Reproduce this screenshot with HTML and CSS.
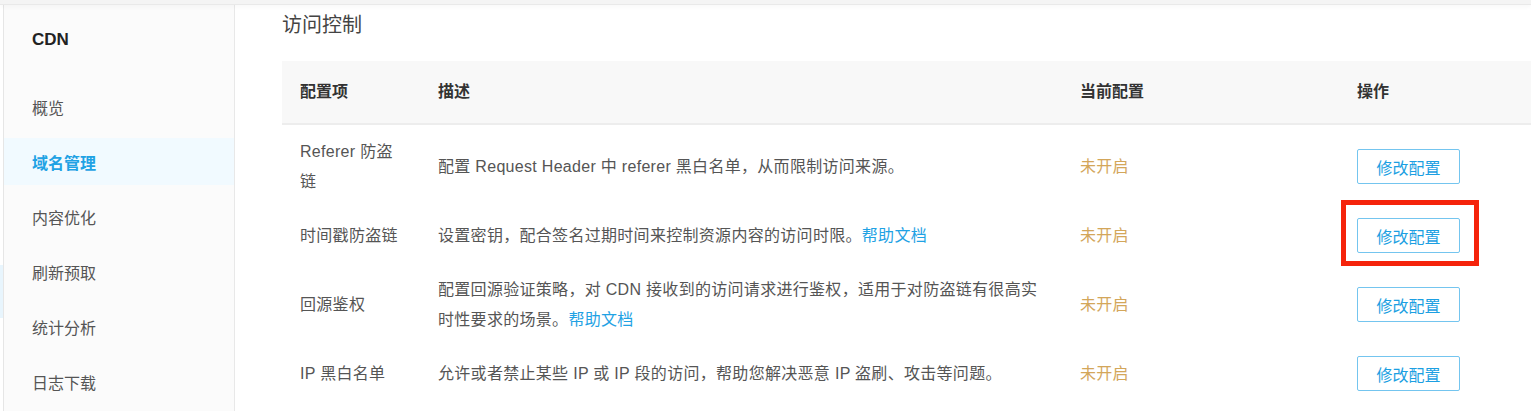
FILE: index.html
```html
<!DOCTYPE html>
<html lang="zh-CN">
<head>
<meta charset="utf-8">
<title>CDN 访问控制</title>
<link rel="stylesheet" href="styles.css">
</head>
<body>
<div class="page">
  <div class="topbar"></div>
  <div class="layout">
    <div class="edge"><div class="edge-mark"></div></div>
    <nav class="sidebar">
      <div class="side-title">CDN</div>
      <div class="side-item">概览</div>
      <div class="side-item active">域名管理</div>
      <div class="side-item">内容优化</div>
      <div class="side-item">刷新预取</div>
      <div class="side-item">统计分析</div>
      <div class="side-item">日志下载</div>
    </nav>
    <main class="main">
      <h2 class="section-title">访问控制</h2>
      <div class="table">
        <div class="row head">
          <div class="cell c1">配置项</div>
          <div class="cell c2">描述</div>
          <div class="cell c3">当前配置</div>
          <div class="cell c4">操作</div>
        </div>
        <div class="tbody">
          <div class="row">
            <div class="cell c1">Referer 防盗链</div>
            <div class="cell c2">配置 Request Header 中 referer 黑白名单，从而限制访问来源。</div>
            <div class="cell c3 off">未开启</div>
            <div class="cell c4"><button class="btn">修改配置</button></div>
          </div>
          <div class="row">
            <div class="cell c1">时间戳防盗链</div>
            <div class="cell c2">设置密钥，配合签名过期时间来控制资源内容的访问时限。<a class="link">帮助文档</a></div>
            <div class="cell c3 off">未开启</div>
            <div class="cell c4"><button class="btn">修改配置</button></div>
          </div>
          <div class="row">
            <div class="cell c1">回源鉴权</div>
            <div class="cell c2">配置回源验证策略，对 CDN 接收到的访问请求进行鉴权，适用于对防盗链有很高实时性要求的场景。<a class="link">帮助文档</a></div>
            <div class="cell c3 off">未开启</div>
            <div class="cell c4"><button class="btn">修改配置</button></div>
          </div>
          <div class="row">
            <div class="cell c1">IP 黑白名单</div>
            <div class="cell c2">允许或者禁止某些 IP 或 IP 段的访问，帮助您解决恶意 IP 盗刷、攻击等问题。</div>
            <div class="cell c3 off">未开启</div>
            <div class="cell c4"><button class="btn">修改配置</button></div>
          </div>
        </div>
      </div>
    </main>
  </div>
  <div class="highlight"></div>
</div>
</body>
</html>
```

FILE: styles.css
```css
html, body {
  margin: 0;
  padding: 0;
  background: #fff;
}
body {
  font-family: "Liberation Sans", "Noto Sans CJK SC", sans-serif;
  font-size: 16px;
  color: #555;
  overflow: hidden;
}
.page {
  position: relative;
  width: 1531px;
  height: 411px;
  overflow: hidden;
}
.topbar {
  height: 4px;
  background: #f4f4f4;
  border-bottom: 1px solid #e9e9e9;
  box-shadow: 0 2px 4px rgba(0, 0, 0, 0.03);
  position: relative;
  z-index: 2;
}
.layout {
  display: flex;
  height: 406px;
}
.edge {
  width: 3px;
  background: #fff;
  display: flex;
  flex-direction: column;
}
.edge-mark {
  margin-top: 260px;
  height: 53px;
  background: #e8f5fd;
}
.sidebar {
  width: 230px;
  background: #fbfbfb;
  border-left: 1px solid #e6e6e6;
  border-right: 1px solid #e8e8e8;
  display: flex;
  flex-direction: column;
  gap: 8px;
}
.side-title {
  height: 70px;
  display: flex;
  align-items: center;
  padding-left: 28px;
  font-size: 17px;
  font-weight: bold;
  color: #222;
}
.side-item {
  height: 47px;
  display: flex;
  align-items: center;
  padding-left: 28px;
  color: #555;
  font-size: 16px;
}
.side-item.active {
  background: #f1faff;
  color: #1fa2e4;
  font-weight: bold;
}
.main {
  flex: 1;
  padding-left: 47px;
}
.section-title {
  margin: 0;
  height: 40px;
  line-height: 40px;
  font-size: 20px;
  font-weight: normal;
  color: #444;
  margin-bottom: 16px;
}
.table {
  width: 1249px;
}
.row {
  display: grid;
  grid-template-columns: 138px 642px 277px 1fr;
  height: 69px;
  align-items: center;
}
.row.head {
  height: 62px;
  background: #f8f8f8;
  border-bottom: 2px solid #ededed;
  font-weight: bold;
  color: #333;
}
.tbody {
  padding-top: 7px;
}
.cell {
  padding-left: 18px;
  line-height: 30px;
  letter-spacing: 0.3px;
}
.head .cell {
  letter-spacing: 0;
}
.c1 {
  padding-right: 20px;
}
.c2 {
  padding-right: 20px;
}
.off {
  color: #d3a65a;
}
.link {
  color: #1fa2e4;
  text-decoration: none;
}
.btn {
  width: 103px;
  height: 35px;
  border: 1px solid #74c5ef;
  border-radius: 2px;
  background: #fff;
  color: #1c9fe2;
  font-family: "Liberation Sans", "Noto Sans CJK SC", sans-serif;
  font-size: 16px;
  padding: 0;
  display: block;
}
.highlight {
  position: absolute;
  left: 1341px;
  top: 200px;
  width: 128px;
  height: 56px;
  border: 5px solid #f5230b;
}
```
